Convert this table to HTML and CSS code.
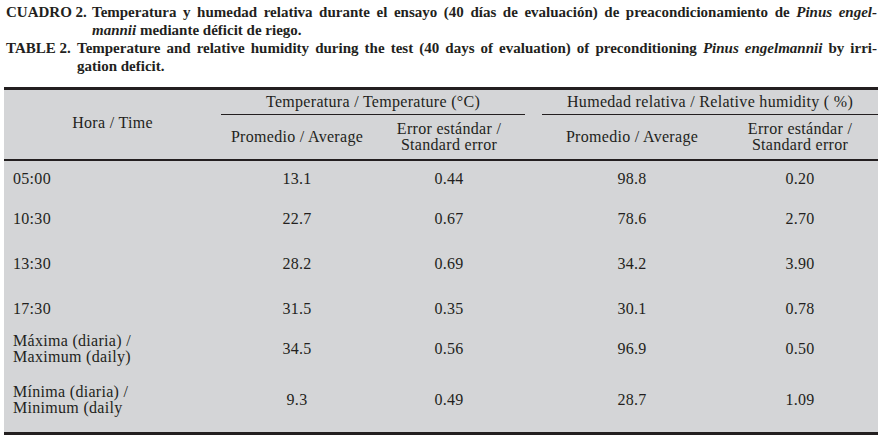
FILE: index.html
```html
<!DOCTYPE html>
<html lang="es">
<head>
<meta charset="utf-8">
<title>Cuadro 2</title>
<link rel="stylesheet" href="styles.css">
</head>
<body>
<div class="caption">
  <div class="cap-row">
    <span class="cap-label cuadro">CUADRO 2.</span>
    <div class="cap-text">
      <div class="line full">Temperatura y humedad relativa durante el ensayo (40 días de evaluación) de preacondicionamiento de <i>Pinus engel-</i></div>
      <div class="line"><i>mannii</i> mediante déficit de riego.</div>
    </div>
  </div>
  <div class="cap-row">
    <span class="cap-label tbl">TABLE 2.</span>
    <div class="cap-text">
      <div class="line full">Temperature and relative humidity during the test (40 days of evaluation) of preconditioning <i>Pinus engelmannii</i> by irri-</div>
      <div class="line">gation deficit.</div>
    </div>
  </div>
</div>
<table class="data">
  <colgroup>
    <col class="c-time">
    <col class="c-num">
    <col class="c-num">
    <col class="c-gap">
    <col class="c-num2">
    <col class="c-num3">
  </colgroup>
  <thead>
    <tr class="h1">
      <th rowspan="2" class="time-h">Hora / Time</th>
      <th colspan="2" class="grp">Temperatura / Temperature (°C)</th>
      <th class="gap"></th>
      <th colspan="2" class="grp">Humedad relativa / Relative humidity ( %)</th>
    </tr>
    <tr class="h2">
      <th>Promedio / Average</th>
      <th>Error estándar /<br>Standard error</th>
      <th class="gap"></th>
      <th>Promedio / Average</th>
      <th>Error estándar /<br>Standard error</th>
    </tr>
  </thead>
  <tbody>
    <tr class="r1"><td class="lbl">05:00</td><td>13.1</td><td>0.44</td><td></td><td>98.8</td><td>0.20</td></tr>
    <tr class="r2"><td class="lbl">10:30</td><td>22.7</td><td>0.67</td><td></td><td>78.6</td><td>2.70</td></tr>
    <tr class="r3"><td class="lbl">13:30</td><td>28.2</td><td>0.69</td><td></td><td>34.2</td><td>3.90</td></tr>
    <tr class="r4"><td class="lbl">17:30</td><td>31.5</td><td>0.35</td><td></td><td>30.1</td><td>0.78</td></tr>
    <tr class="r5"><td class="lbl">Máxima (diaria) /<br>Maximum (daily)</td><td>34.5</td><td>0.56</td><td></td><td>96.9</td><td>0.50</td></tr>
    <tr class="r6"><td class="lbl">Mínima (diaria) /<br>Minimum (daily</td><td>9.3</td><td>0.49</td><td></td><td>28.7</td><td>1.09</td></tr>
  </tbody>
</table>
</body>
</html>
```
FILE: styles.css
```css
html, body {
  margin: 0;
  padding: 0;
  background: #ffffff;
}

body {
  font-family: "Liberation Serif", "Times New Roman", serif;
  color: #231f20;
}

.caption {
  padding: 3px 10px 0 6px;
  font-weight: bold;
  font-size: 15px;
  line-height: 18px;
}

.cap-row {
  display: flex;
}

.cap-label {
  flex: none;
}

.cap-label.cuadro {
  width: 86px;
}

.cap-label.tbl {
  width: 71px;
}

.cap-text {
  flex: 1;
  min-width: 0;
}

.line.full {
  text-align: justify;
  text-align-last: justify;
}

.data {
  margin: 12px 0 0 4px;
  width: 874px;
  table-layout: fixed;
  border-collapse: separate;
  border-spacing: 0;
  background: #d4d5d7;
  border-top: 3px solid #231f20;
  border-bottom: 3px solid #231f20;
  font-size: 16px;
  line-height: 16px;
  letter-spacing: 0.3px;
}

.c-time { width: 217px; }
.c-num { width: 152px; }
.c-gap { width: 17px; }
.c-num2 { width: 180px; }
.c-num3 { width: 156px; }

.data th {
  font-weight: normal;
  text-align: center;
  vertical-align: middle;
  padding: 0;
}

.h1 th {
  height: 24px;
}

.h1 .grp {
  border-bottom: 1px solid #231f20;
}

.h2 th {
  height: 44px;
  border-bottom: 2px solid #231f20;
}

.data .time-h {
  border-bottom: 2px solid #231f20;
  padding-bottom: 4px;
}

.data .h2 .gap {
  border-bottom: 2px solid #231f20;
}

.data td {
  padding: 0;
  text-align: center;
  vertical-align: middle;
}

.data td.lbl {
  text-align: left;
  padding-left: 9px;
}

.r1 td { height: 36px; }
.r2 td { height: 44px; }
.r3 td { height: 46px; }
.r4 td { height: 44px; }
.r5 td { height: 36px; }
.r6 td { height: 65px; }
```
